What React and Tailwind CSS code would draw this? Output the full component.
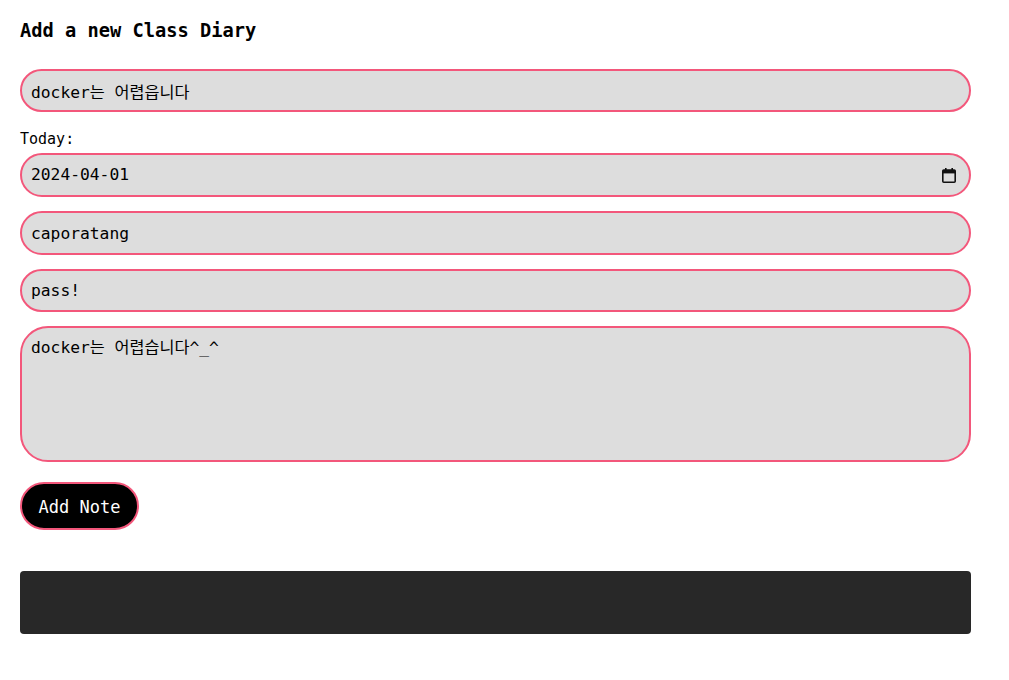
import React, { useState } from 'react'

const fieldCls =
  'w-full bg-[#dddddd] border-2 border-[#f3577b] rounded-full px-[9px] text-[16.3px] text-black outline-none'

function CalendarIcon() {
  return (
    <svg width="14" height="15" viewBox="0 0 14 15" className="shrink-0">
      <rect x="3" y="0" width="1.6" height="3" fill="#111" />
      <rect x="9.4" y="0" width="1.6" height="3" fill="#111" />
      <rect x="0.8" y="2" width="12.4" height="12.2" rx="1" fill="none" stroke="#111" strokeWidth="1.6" />
      <rect x="0.8" y="2" width="12.4" height="3.4" fill="#111" />
    </svg>
  )
}

export default function App() {
  const [title, setTitle] = useState('docker는 어렵읍니다')
  const [date, setDate] = useState('2024-04-01')
  const [author, setAuthor] = useState('caporatang')
  const [pw, setPw] = useState('pass!')
  const [body, setBody] = useState('docker는 어렵습니다^_^')

  return (
    <div className="min-h-[680px] bg-white font-['DejaVu_Sans_Mono','Noto_Sans_Mono_CJK_KR','Noto_Sans_CJK_KR',monospace]">
      <div className="ml-5 w-[951px] pt-[19px]">
        <h3 className="text-[18.7px] leading-6 font-bold text-black">Add a new Class Diary</h3>

        <div className="mt-[26px] flex flex-col">
          <input
            className={`${fieldCls} h-[43px]`}
            value={title}
            onChange={e => setTitle(e.target.value)}
          />

          <label className="mt-[18px] h-[18px] text-[15px] leading-[18px] text-black">Today:</label>
          <div className="mt-[5px] flex h-[44px] w-full items-center rounded-full border-2 border-[#f3577b] bg-[#dddddd] pl-[9px] pr-[13px]">
            <input
              className="min-w-0 flex-1 bg-transparent pt-px text-[16.3px] text-black outline-none"
              value={date}
              onChange={e => setDate(e.target.value)}
            />
            <CalendarIcon />
          </div>

          <input
            className={`${fieldCls} h-[44px] mt-[14px]`}
            value={author}
            onChange={e => setAuthor(e.target.value)}
          />
          <input
            className={`${fieldCls} h-[43px] mt-[14px]`}
            value={pw}
            onChange={e => setPw(e.target.value)}
          />

          {/* diary body */}
          <textarea
            className="mt-[14px] h-[136px] w-full resize-none bg-[#dddddd] border-2 border-[#f3577b] rounded-[28px] px-[9px] pt-[10px] text-[16.3px] leading-[20px] text-black outline-none"
            value={body}
            onChange={e => setBody(e.target.value)}
          />
        </div>

        <button className="mt-5 h-12 w-[119px] rounded-full border-2 border-[#f3577b] bg-black pt-[3px] text-[17px] text-white">
          Add Note
        </button>

        <div className="mt-[41px] h-[63px] w-full rounded bg-[#282828]" />
      </div>
    </div>
  )
}
